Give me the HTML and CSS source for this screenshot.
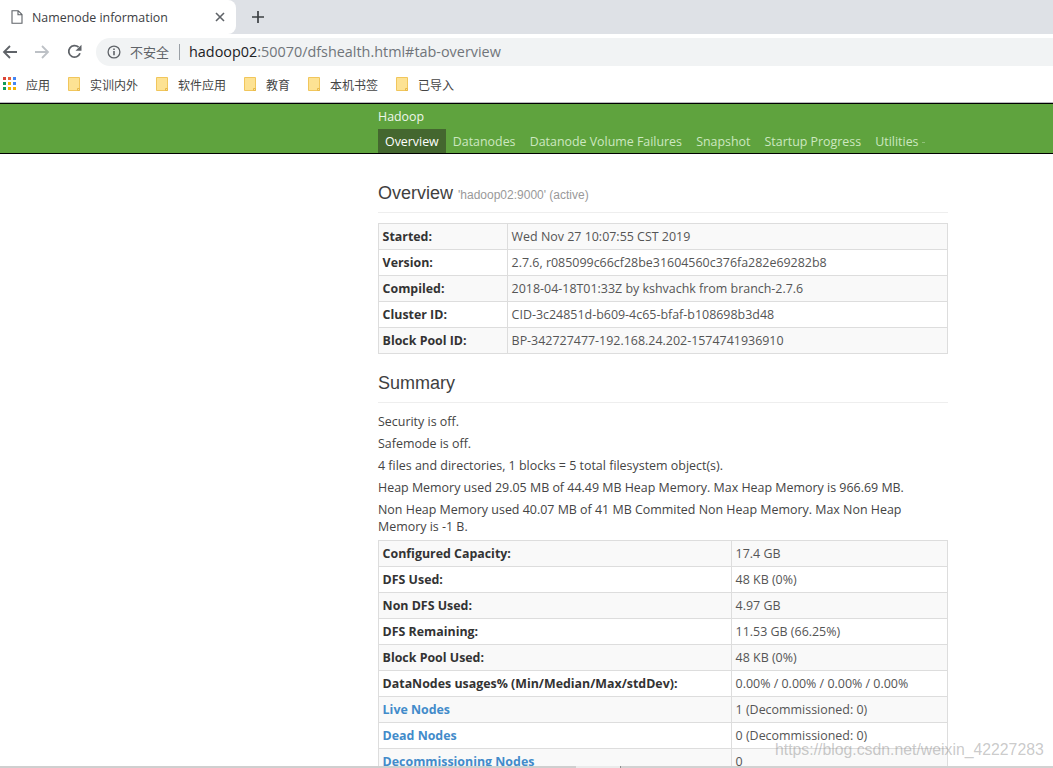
FILE: index.html
```html
<!DOCTYPE html>
<html lang="zh">
<head>
<meta charset="utf-8">
<title>Namenode information</title>
<link rel="stylesheet" href="styles.css">
</head>
<body>
<div class="chrome">
  <div class="tabstrip">
    <div class="tab">
      <svg class="tab-icon" width="12" height="14" viewBox="0 0 12 14"><path d="M1 .7h6.2L11 4.5v8.8H1z M7 .7v4h4" fill="#fff" stroke="#5f6368" stroke-width="1.1"/></svg>
      <span class="tab-title">Namenode information</span>
      <svg class="tab-close" width="10" height="10" viewBox="0 0 10 10"><path d="M1 1l8 8M9 1l-8 8" stroke="#5f6368" stroke-width="1.6"/></svg>
    </div>
    <svg class="newtab" width="12" height="12" viewBox="0 0 12 12"><path d="M6 0v12M0 6h12" stroke="#3c4043" stroke-width="1.7"/></svg>
  </div>
  <div class="toolbar">
    <svg class="nav back" width="16" height="14" viewBox="0 0 16 14"><path d="M15 7H2M8 1L2 7l6 6" fill="none" stroke="#5f6368" stroke-width="1.8"/></svg>
    <svg class="nav fwd" width="16" height="14" viewBox="0 0 16 14"><path d="M1 7h13M8 1l6 6-6 6" fill="none" stroke="#bdc1c6" stroke-width="1.8"/></svg>
    <svg class="nav reload" width="15" height="15" viewBox="0 0 15 15"><path d="M13 9.300A5.800 5.800 0 1 1 11.600 3.200" fill="none" stroke="#5f6368" stroke-width="1.800"/><path d="M14.500 .8v6h-6z" fill="#5f6368"/></svg>
    <div class="omnibox">
      <svg class="info" width="14" height="14" viewBox="0 0 14 14"><circle cx="7" cy="7" r="5.900" fill="none" stroke="#5f6368" stroke-width="1.300"/><path d="M6.200 6h1.600v4.300H6.200zM6.200 3.500h1.600v1.500H6.200z" fill="#5f6368"/></svg>
      <span class="insecure">不安全</span>
      <span class="sep"></span>
      <span class="url"><span class="host">hadoop02</span>:50070/dfshealth.html#tab-overview</span>
    </div>
  </div>
  <div class="bookmarks">
    <div class="bm apps">
      <svg width="14" height="14" viewBox="0 0 14 14"><g><rect x="0" y="0" width="3" height="3" fill="#db4437"/><rect x="5" y="0" width="3" height="3" fill="#e8603c"/><rect x="10" y="0" width="3" height="3" fill="#4285f4"/><rect x="0" y="5" width="3" height="3" fill="#0f9d58"/><rect x="5" y="5" width="3" height="3" fill="#f4b400"/><rect x="10" y="5" width="3" height="3" fill="#4285f4"/><rect x="0" y="10" width="3" height="3" fill="#0f9d58"/><rect x="5" y="10" width="3" height="3" fill="#f4b400"/><rect x="10" y="10" width="3" height="3" fill="#f4b400"/></g></svg>
      <span>应用</span>
    </div>
    <div class="bm w1"><svg class="folder" width="12" height="14" viewBox="0 0 12 14"><path d="M.5.500h11v13H.5z" fill="#fde293" stroke="#f1c65c"/><path d="M9.500 11.500h2v2h-2z" fill="#fde293" stroke="#e9b949"/></svg><span>实训内外</span></div>
    <div class="bm w2"><svg class="folder" width="12" height="14" viewBox="0 0 12 14"><path d="M.5.500h11v13H.5z" fill="#fde293" stroke="#f1c65c"/><path d="M9.500 11.500h2v2h-2z" fill="#fde293" stroke="#e9b949"/></svg><span>软件应用</span></div>
    <div class="bm w3"><svg class="folder" width="12" height="14" viewBox="0 0 12 14"><path d="M.5.500h11v13H.5z" fill="#fde293" stroke="#f1c65c"/><path d="M9.500 11.500h2v2h-2z" fill="#fde293" stroke="#e9b949"/></svg><span>教育</span></div>
    <div class="bm w4"><svg class="folder" width="12" height="14" viewBox="0 0 12 14"><path d="M.5.500h11v13H.5z" fill="#fde293" stroke="#f1c65c"/><path d="M9.500 11.500h2v2h-2z" fill="#fde293" stroke="#e9b949"/></svg><span>本机书签</span></div>
    <div class="bm"><svg class="folder" width="12" height="14" viewBox="0 0 12 14"><path d="M.5.500h11v13H.5z" fill="#fde293" stroke="#f1c65c"/><path d="M9.500 11.500h2v2h-2z" fill="#fde293" stroke="#e9b949"/></svg><span>已导入</span></div>
  </div>
</div>
<div class="viewport">
  <nav class="navbar">
    <div class="container">
      <div class="brand">Hadoop</div>
      <ul class="navlinks">
        <li class="active">Overview</li>
        <li>Datanodes</li>
        <li>Datanode Volume Failures</li>
        <li>Snapshot</li>
        <li>Startup Progress</li>
        <li>Utilities<span class="caret"></span></li>
      </ul>
    </div>
  </nav>
  <main class="container">
    <div class="page-header first">
      <h1>Overview <small>'hadoop02:9000' (active)</small></h1>
    </div>
    <table class="info-table t1">
      <tr><th>Started:</th><td>Wed Nov 27 10:07:55 CST 2019</td></tr>
      <tr><th>Version:</th><td>2.7.6, r085099c66cf28be31604560c376fa282e69282b8</td></tr>
      <tr><th>Compiled:</th><td>2018-04-18T01:33Z by kshvachk from branch-2.7.6</td></tr>
      <tr><th>Cluster ID:</th><td>CID-3c24851d-b609-4c65-bfaf-b108698b3d48</td></tr>
      <tr><th>Block Pool ID:</th><td>BP-342727477-192.168.24.202-1574741936910</td></tr>
    </table>
    <div class="page-header second">
      <h1>Summary</h1>
    </div>
    <p>Security is off.</p>
    <p>Safemode is off.</p>
    <p>4 files and directories, 1 blocks = 5 total filesystem object(s).</p>
    <p>Heap Memory used 29.05 MB of 44.49 MB Heap Memory. Max Heap Memory is 966.69 MB.</p>
    <p class="last">Non Heap Memory used 40.07 MB of 41 MB Commited Non Heap Memory. Max Non Heap Memory is -1 B.</p>
    <table class="info-table t2">
      <tr><th>Configured Capacity:</th><td>17.4 GB</td></tr>
      <tr><th>DFS Used:</th><td>48 KB (0%)</td></tr>
      <tr><th>Non DFS Used:</th><td>4.97 GB</td></tr>
      <tr><th>DFS Remaining:</th><td>11.53 GB (66.25%)</td></tr>
      <tr><th>Block Pool Used:</th><td>48 KB (0%)</td></tr>
      <tr><th>DataNodes usages% (Min/Median/Max/stdDev):</th><td>0.00% / 0.00% / 0.00% / 0.00%</td></tr>
      <tr><th><a href="#">Live Nodes</a></th><td>1 (Decommissioned: 0)</td></tr>
      <tr><th><a href="#">Dead Nodes</a></th><td>0 (Decommissioned: 0)</td></tr>
      <tr><th><a href="#">Decommissioning Nodes</a></th><td>0</td></tr>
    </table>
  </main>
  <div class="watermark">https://blog.csdn.net/weixin_42227283</div>
  <div class="hscroll"><span class="seg-a"></span><span class="seg-b"></span><span class="seg-c"></span><span class="seg-d"></span></div>
</div>
</body>
</html>
```
FILE: styles.css
```css
* { box-sizing: border-box; }
html, body { margin: 0; height: 768px; overflow: hidden; background: #fff; }
body { font-family: "Open Sans", "Noto Sans CJK SC", sans-serif; color: #333; }

.tabstrip { height: 34px; background: #dee1e6; display: flex; align-items: center; }
.tab { width: 236px; height: 34px; background: #fff; border-radius: 0 8px 8px 0; display: flex; align-items: center; padding-left: 11px; }
.tab-icon { flex: none; }
.tab-title { margin-left: 9px; font: 12.400px "Open Sans", sans-serif; color: #3c4043; width: 183px; }
.tab-close { flex: none; }
.newtab { margin-left: 16px; }

.toolbar { height: 35px; display: flex; align-items: center; padding-left: 2px; background: #fff; }
.nav { flex: none; }
.fwd { margin-left: 16px; }
.reload { margin-left: 17px; }
.omnibox { margin-left: 14px; flex: 1; height: 28px; background: #f1f3f4; border-radius: 14px 0 0 14px; display: flex; align-items: center; padding-left: 11px; white-space: nowrap; }
.insecure { margin-left: 9px; font: 13px "Noto Sans CJK SC", sans-serif; color: #5f6368; }
.sep { width: 1px; height: 16px; background: #9aa0a6; margin: 0 9px 0 10px; }
.url { font: 14.400px "Open Sans", sans-serif; color: #70757a; }
.host { color: #202124; }

.bookmarks { height: 34px; display: flex; align-items: center; padding: 0 0 3px 3px; background: #fff; border-bottom: 1px solid #b8babd; font: 12px "Noto Sans CJK SC", sans-serif; color: #444; }
.bm { display: flex; align-items: center; gap: 10px; flex: none; margin-right: 18px; }
.bm span { white-space: nowrap; }
.apps { gap: 9px; }

.viewport { position: relative; height: 665px; overflow: hidden; }
.container { margin-left: 378px; width: 570px; }
.navbar { height: 51px; background: #5fa33e; border-top: 1px solid #000; border-bottom: 1px solid #000; }
.navbar .container { width: 660px; }
.brand { height: 25px; padding-top: 4px; font-size: 12.400px; font-weight: 500; color: #eef6ea; }
.navlinks { list-style: none; margin: 0; padding: 0; display: flex; font-size: 12.400px; font-weight: 500; color: #cde8c0; }
.navlinks li { height: 24px; line-height: 25px; padding: 0 7.100px; white-space: nowrap; }
.navlinks li.active { background: #44672f; color: #fff; padding: 0 7px; }
.caret { display: inline-block; width: 3px; height: 1px; margin-left: 3px; vertical-align: middle; background: #8fc078; }

.page-header { border-bottom: 1px solid #eee; }
.page-header.first { margin-top: 28px; padding-bottom: 6px; margin-bottom: 10px; }
.page-header.second { padding-bottom: 8px; margin-bottom: 10px; }
h1 { margin: 0; font: 400 18px/22px "Liberation Sans", sans-serif; color: #3f3f3f; }
h1 small { font-size: 12px; color: #999; }

.info-table { width: 570px; border-collapse: collapse; table-layout: fixed; font-size: 12.400px; margin-bottom: 18px; }
.info-table tr { height: 26px; }
.info-table th, .info-table td { border: 1px solid #ddd; padding: 0 4px 0 3.600px; text-align: left; white-space: nowrap; }
.info-table tr:nth-child(odd) { background: #f9f9f9; }
.info-table th { font-weight: 700; color: #333; }
.info-table td { font-size: 12.450px; font-weight: 400; color: #555; }
.t1 th { width: 129px; }
.t2 th { width: 353px; }
a { color: #428bca; text-decoration: none; }

p { margin: 0 0 4px; font-size: 12.450px; line-height: 18px; color: #444; }
p.last { margin-bottom: 5px; line-height: 17px; }

.watermark { position: absolute; left: 775px; top: 638px; font: 15.800px "Liberation Sans", sans-serif; color: rgba(120,120,120,.4); }
.hscroll { position: absolute; left: 0; right: 0; bottom: 0; height: 2px; display: flex; }
.seg-a { width: 576px; background: #cfcfcf; }
.seg-b { width: 44px; background: #ebebeb; }
.seg-c { width: 1px; background: #8f8f8f; }
.seg-d { flex: 1; background: #d2d2d2; }
```
